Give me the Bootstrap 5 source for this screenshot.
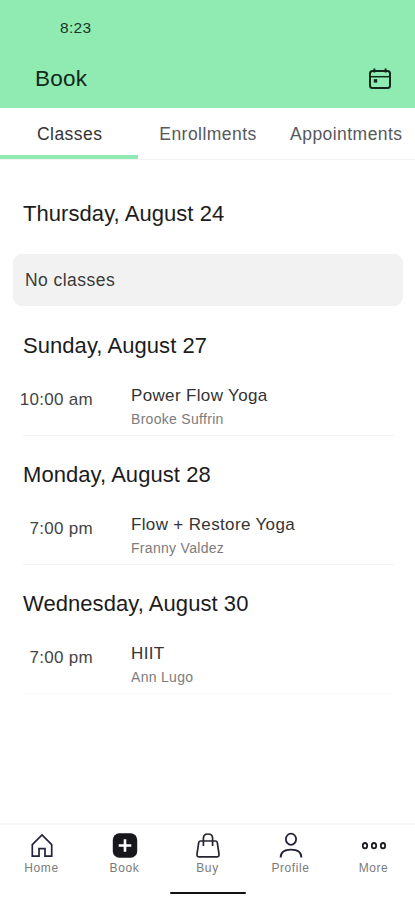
<!DOCTYPE html>
<html lang="en">
<head>
<meta charset="utf-8">
<meta name="viewport" content="width=device-width, initial-scale=1">
<title>Book</title>
<link href="https://cdn.jsdelivr.net/npm/bootstrap@5.3.0/dist/css/bootstrap.min.css" rel="stylesheet">
<style>
body{font-family:"Liberation Sans",Arial,sans-serif;color:#1c1c1c;background:#fff;height:900px;overflow:hidden}
.app-head{background:#90ebb2;height:108px;padding:17px 23px 0 35px}
.clock{font-size:15.5px;letter-spacing:.3px;line-height:22px;padding-left:25px;color:#1b3525}
.app-title{font-size:22.5px;letter-spacing:.2px;line-height:30px;color:#12291b}
.head-row{margin-top:25px}
.class-tabs{height:52px;border-bottom:1px solid #f3f3f3}
.class-tabs .nav-link{height:51px;padding:1px 0 0 1px;line-height:51px;font-size:17.5px;letter-spacing:.45px;color:#55585c;border-radius:0;white-space:nowrap}
.class-tabs .nav-link.active{color:#333;border-bottom:4px solid #90ebb2}
.schedule{padding:39px 12px 0 13px}
.day-title{font-size:22px;letter-spacing:.06px;line-height:30px;margin:0 0 0 10px;font-weight:400;color:#1c1c1c}
.empty-box{margin:25px 0;height:52px;border-radius:9px;background:#f2f2f2;padding-left:12px;font-size:17.5px;letter-spacing:.45px;color:#3a3a3a}
.slot{margin:23px 9px 24px 10px;height:52px;border-bottom:1px solid #f2f2f2}
.slot:last-child{border-bottom-color:#f8f8f8}
.slot-time{width:70px;font-size:17px;letter-spacing:.3px;line-height:32px;color:#444}
.slot-name{font-size:17px;letter-spacing:.35px;line-height:24px;color:#333}
.slot-coach{font-size:14px;letter-spacing:.3px;line-height:18px;margin-top:2px;color:#7c7c7c}
.slot-info{margin-left:38px}
.bottom-bar{height:77px;border-top:2px solid #f7f7f7;padding-top:7px}
.bottom-bar a{font-size:12px;letter-spacing:.6px;line-height:16px;color:#7b7b7b}
.bottom-bar svg{margin-bottom:1px}
.home-line{width:76px;height:2px;background:#111;border-radius:1px;margin-top:16px}
</style>
<script src="https://cdn.jsdelivr.net/npm/bootstrap@5.3.0/dist/js/bootstrap.bundle.min.js"></script>
</head>
<body class="d-flex flex-column">
<header class="app-head">
  <div class="clock">8:23</div>
  <div class="head-row d-flex justify-content-between align-items-center">
    <div class="app-title">Book</div>
    <svg width="24" height="24" viewBox="0 0 24 24" fill="none" stroke="#10291a" stroke-width="2"><rect x="2" y="4" width="20" height="17" rx="2.5"/><path d="M2 9.7h20" stroke-width="1.5"/><path d="M6.4 1.4v4M17.6 1.4v4"/><rect x="5.8" y="12.2" width="3.4" height="3.4" fill="#10291a" stroke="none"/></svg>
  </div>
</header>
<nav class="class-tabs nav flex-nowrap">
  <div class="col-4"><a class="nav-link active text-center">Classes</a></div>
  <div class="col-4"><a class="nav-link text-center">Enrollments</a></div>
  <div class="col-4"><a class="nav-link text-center">Appointments</a></div>
</nav>
<main class="schedule flex-grow-1">
  <h2 class="day-title">Thursday, August 24</h2>
  <div class="empty-box d-flex align-items-center">No classes</div>
  <h2 class="day-title">Sunday, August 27</h2>
  <div class="slot d-flex"><div class="slot-time d-flex justify-content-end text-nowrap">10:00 am</div><div class="slot-info"><div class="slot-name">Power Flow Yoga</div><div class="slot-coach">Brooke Suffrin</div></div></div>
  <h2 class="day-title">Monday, August 28</h2>
  <div class="slot d-flex"><div class="slot-time d-flex justify-content-end text-nowrap">7:00 pm</div><div class="slot-info"><div class="slot-name">Flow + Restore Yoga</div><div class="slot-coach">Franny Valdez</div></div></div>
  <h2 class="day-title">Wednesday, August 30</h2>
  <div class="slot d-flex"><div class="slot-time d-flex justify-content-end text-nowrap">7:00 pm</div><div class="slot-info"><div class="slot-name">HIIT</div><div class="slot-coach">Ann Lugo</div></div></div>
</main>
<footer class="bottom-bar d-flex flex-column align-items-center">
  <nav class="d-flex w-100 text-center">
    <a class="flex-fill w-25 text-decoration-none d-flex flex-column align-items-center"><svg width="26" height="27" viewBox="0 0 26 27" fill="none" stroke="#22223a" stroke-width="1.7"><path d="M3.3 24.2V12.6L13 3l9.7 9.6v11.6h-6.7v-7.6h-6v7.6z"/></svg>Home</a>
    <a class="flex-fill w-25 text-decoration-none d-flex flex-column align-items-center"><svg width="26" height="27" viewBox="0 0 26 27"><rect x=".8" y="1.3" width="24.4" height="24.4" rx="6.5" fill="#17171c"/><path d="M13 7.2v12.6M6.7 13.5h12.6" stroke="#fff" stroke-width="2.6"/></svg>Book</a>
    <a class="flex-fill w-25 text-decoration-none d-flex flex-column align-items-center"><svg width="26" height="27" viewBox="0 0 26 27" fill="none" stroke="#25252e" stroke-width="1.7"><path d="M5.6 9h14.8q1.6 0 1.9 1.6l1.7 11.4q.3 2.9-2.2 2.9H4.2q-2.5 0-2.2-2.9l1.7-11.4Q4 9 5.6 9z"/><path d="M8.4 14V6.2Q8.4 2 13 2t4.6 4.2V14"/></svg>Buy</a>
    <a class="flex-fill w-25 text-decoration-none d-flex flex-column align-items-center"><svg width="26" height="27" viewBox="0 0 26 27" fill="none" stroke="#22223a" stroke-width="1.8"><ellipse cx="13" cy="7.2" rx="5.1" ry="5.6"/><path d="M2.6 25.6c0-5 3.6-8 10.4-8s10.4 3 10.4 8"/></svg>Profile</a>
    <a class="flex-fill w-25 text-decoration-none d-flex flex-column align-items-center"><svg width="26" height="27" viewBox="0 0 26 27" fill="none" stroke="#1c1c22" stroke-width="1.8"><ellipse cx="4" cy="13.7" rx="2.2" ry="2.7"/><ellipse cx="13" cy="13.7" rx="2.2" ry="2.7"/><ellipse cx="22" cy="13.7" rx="2.2" ry="2.7"/></svg>More</a>
  </nav>
  <div class="home-line"></div>
</footer>
</body>
</html>
